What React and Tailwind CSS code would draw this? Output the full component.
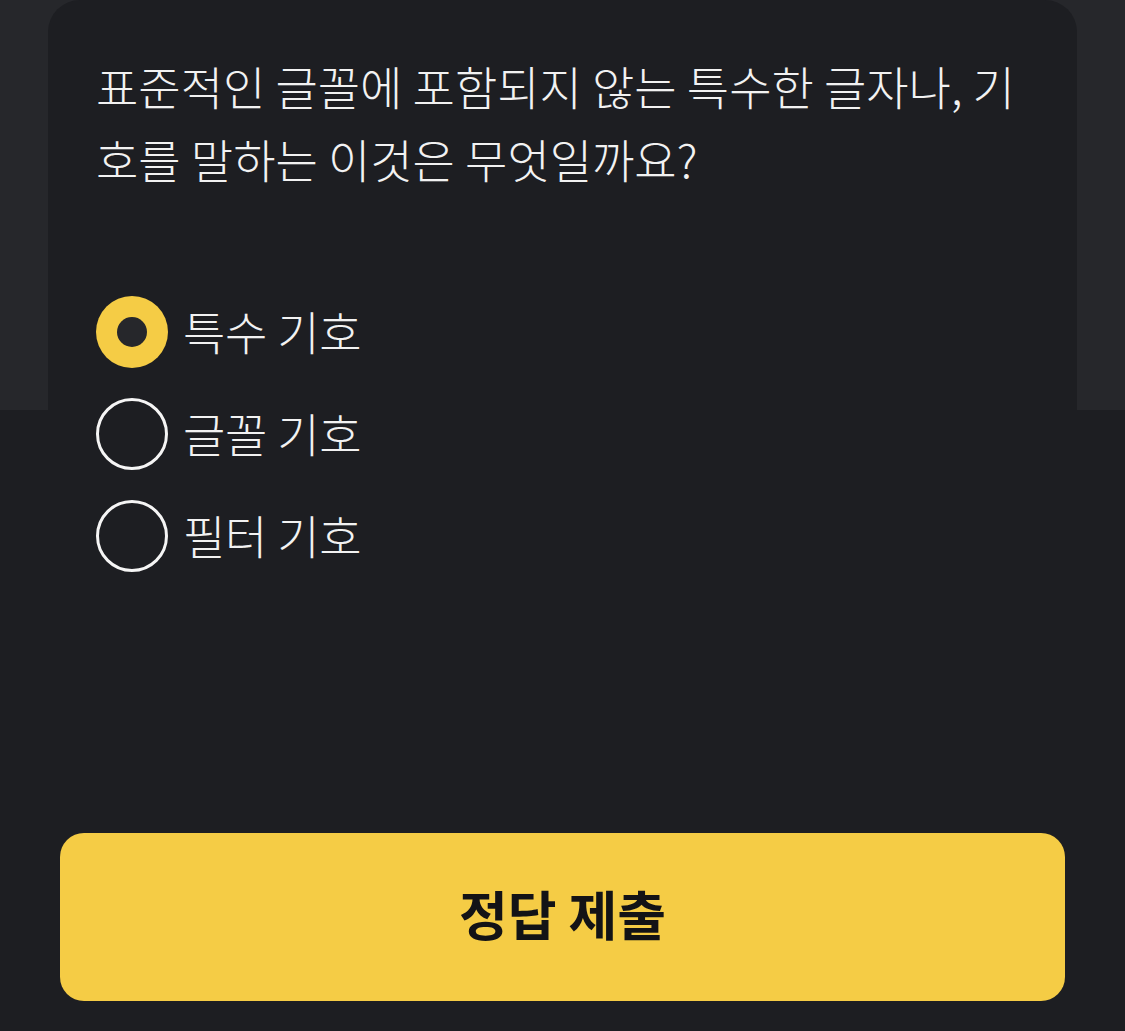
import { useState } from 'react';

const options = ['특수 기호', '글꼴 기호', '필터 기호'];

const Radio = ({ checked }) =>
  checked ? (
    <span className="flex items-center justify-center w-[72px] h-[72px] rounded-full bg-[#f5cc45] shrink-0">
      <span className="w-[30px] h-[30px] rounded-full bg-[#26272b]" />
    </span>
  ) : (
    <span className="w-[72px] h-[72px] rounded-full border-[3px] border-[#f5f5f5] shrink-0" />
  );

const App = () => {
  const [selected, setSelected] = useState(0);

  return (
    <div
      className="flex flex-col w-full h-[1031px] overflow-hidden bg-[linear-gradient(to_bottom,#26272b_410px,#1d1e22_410px)]"
      style={{ fontFamily: '"Noto Sans CJK KR", "Noto Sans", sans-serif' }}
    >
      <div className="flex flex-col flex-1 mx-[48px] rounded-t-[32px] bg-[#1d1e22]">
        <div className="px-[48px] pt-[49px]">
          <p className="text-[46px] leading-[73px] text-[#f2f2f2] font-light tracking-[0px]">
            표준적인 글꼴에 포함되지 않는 특수한 글자나, 기호를 말하는 이것은 무엇일까요?
          </p>

          <div className="flex flex-col gap-[30px] mt-[101px]">
            {options.map((opt, i) => (
              <button
                key={opt}
                onClick={() => setSelected(i)}
                className="flex items-center gap-[15px] text-left"
              >
                <Radio checked={selected === i} />
                <span className="text-[46px] leading-none text-[#f2f2f2] font-light tracking-[-0.2px] pb-[5px]">
                  {opt}
                </span>
              </button>
            ))}
          </div>
        </div>

        <div className="mt-auto px-[12px] pb-[30px]">
          <button className="flex items-center justify-center w-full h-[168px] rounded-[24px] bg-[#f5cc45] text-[#131316] text-[53px] font-bold pb-[6px]">
            정답 제출
          </button>
        </div>
      </div>
    </div>
  );
};

export default App;
